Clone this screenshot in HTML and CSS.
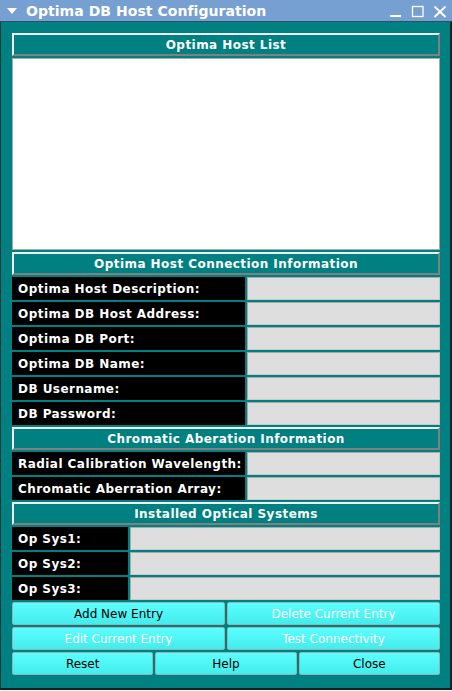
FILE: index.html
```html
<!DOCTYPE html>
<html>
<head>
<meta charset="utf-8">
<link rel="stylesheet" href="styles.css">
</head>
<body>
<div class="window">
  <div class="titlebar">
    <svg class="menu" width="12" height="8" viewBox="0 0 12 8"><polygon points="1,1 11,1 6,7" fill="#fff"/></svg>
    <span class="title">Optima DB Host Configuration</span>
    <span class="controls">
      <svg width="14" height="14" viewBox="0 0 14 14"><rect x="1" y="10" width="11" height="2" fill="#fff"/></svg>
      <svg width="14" height="14" viewBox="0 0 14 14"><rect x="1.5" y="1.5" width="10.5" height="10" fill="none" stroke="#fff" stroke-width="1.3"/></svg>
      <svg width="14" height="14" viewBox="0 0 14 14"><path d="M1.5 1.5 L12.5 12 M12.5 1.5 L1.5 12" stroke="#fff" stroke-width="1.8"/></svg>
    </span>
  </div>
  <div class="body">
    <div class="header">Optima Host List</div>
    <div class="list"></div>
    <div class="header">Optima Host Connection Information</div>
    <div class="row"><div class="label">Optima Host Description:</div><div class="field"></div></div>
    <div class="row"><div class="label">Optima DB Host Address:</div><div class="field"></div></div>
    <div class="row"><div class="label">Optima DB Port:</div><div class="field"></div></div>
    <div class="row"><div class="label">Optima DB Name:</div><div class="field"></div></div>
    <div class="row"><div class="label">DB Username:</div><div class="field"></div></div>
    <div class="row"><div class="label">DB Password:</div><div class="field"></div></div>
    <div class="header">Chromatic Aberation Information</div>
    <div class="row"><div class="label">Radial Calibration Wavelength:</div><div class="field"></div></div>
    <div class="row"><div class="label">Chromatic Aberration Array:</div><div class="field"></div></div>
    <div class="header">Installed Optical Systems</div>
    <div class="row narrow"><div class="label">Op Sys1:</div><div class="field"></div></div>
    <div class="row narrow"><div class="label">Op Sys2:</div><div class="field"></div></div>
    <div class="row narrow"><div class="label">Op Sys3:</div><div class="field"></div></div>
    <div class="btnrow two">
      <div class="btn">Add New Entry</div>
      <div class="btn dis">Delete Current Entry</div>
    </div>
    <div class="btnrow two">
      <div class="btn dis">Edit Current Entry</div>
      <div class="btn dis">Test Connectivity</div>
    </div>
    <div class="btnrow three">
      <div class="btn">Reset</div>
      <div class="btn">Help</div>
      <div class="btn">Close</div>
    </div>
  </div>
</div>
</body>
</html>
```
FILE: styles.css
```css
html, body {
  margin: 0;
  padding: 0;
  background: #f4f4f4;
}
body {
  font-family: "DejaVu Sans", sans-serif;
  width: 452px;
  height: 691px;
  overflow: hidden;
}
.window {
  width: 452px;
}
.titlebar {
  height: 21px;
  background: #76a0d2;
  border-bottom: 1px solid #2f4f66;
  display: flex;
  align-items: center;
  color: #fff;
  box-sizing: content-box;
}
.menu {
  margin-left: 6px;
  margin-top: 1px;
}
.title {
  font-weight: bold;
  font-size: 14px;
  margin-left: 8px;
  letter-spacing: 0.05px;
}
.controls {
  margin-left: auto;
  display: flex;
  gap: 8px;
  margin-right: 5px;
  margin-top: 2px;
}
.body {
  background: #008080;
  border-left: 1px solid #0f3b3b;
  border-right: 2px solid #0a2222;
  border-bottom: 2px solid #0a2222;
  padding: 11px 10px 11px 11px;
  height: 644px;
  box-sizing: content-box;
  display: flex;
  flex-direction: column;
  gap: 2px;
}
.header {
  height: 19px;
  border: 2px solid;
  border-color: #f0f0f0 #808080 #808080 #f0f0f0;
  color: #fff;
  font-weight: bold;
  font-size: 12px;
  display: flex;
  align-items: center;
  justify-content: center;
  letter-spacing: 0.45px;
}
.list {
  height: 190px;
  background: #fff;
  border: 1px solid #a8a8a8;
}
.row {
  display: grid;
  grid-template-columns: 233px 1fr;
  gap: 2px;
  height: 23px;
}
.row.narrow {
  grid-template-columns: 116px 1fr;
}
.label {
  background: #000;
  color: #fff;
  font-weight: bold;
  font-size: 12px;
  display: flex;
  align-items: center;
  padding-left: 6px;
  letter-spacing: 0.45px;
}
.field {
  background: #dedede;
  border: 1px solid;
  border-color: #a8a8a8 #c8c8c8 #c8c8c8 #a8a8a8;
}
.btnrow {
  display: grid;
  gap: 2px;
  height: 23px;
}
.btnrow.two {
  grid-template-columns: 1fr 1fr;
}
.btnrow.three {
  grid-template-columns: 1fr 1fr 1fr;
}
.btn {
  background: linear-gradient(#5cfefe, #44ecec);
  border: 1px solid #92b4b4;
  border-radius: 2px;
  color: #000;
  font-size: 12px;
  display: flex;
  align-items: center;
  justify-content: center;
}
.btn.dis {
  color: #fff;
}
```
